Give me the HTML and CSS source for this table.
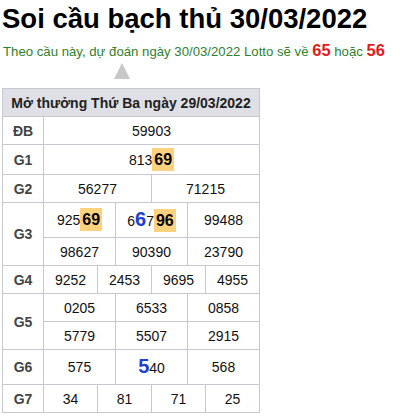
FILE: index.html
```html
<!DOCTYPE html>
<html lang="vi">
<head>
<meta charset="utf-8">
<link rel="stylesheet" href="styles.css">
</head>
<body>
<h1 class="title">Soi cầu bạch thủ 30/03/2022</h1>
<p class="predict">Theo cầu này, dự đoán ngày 30/03/2022 Lotto sẽ về <b class="red">65</b> hoặc <b class="red">56</b></p>
<div class="arrow-wrap"><span class="arrow"></span></div>
<table class="kq">
  <colgroup>
    <col class="c-label">
    <col><col><col><col><col><col><col><col><col><col><col><col>
  </colgroup>
  <thead>
    <tr><th colspan="13" class="head">Mở thưởng Thứ Ba ngày 29/03/2022</th></tr>
  </thead>
  <tbody>
    <tr><td class="lbl">ĐB</td><td colspan="12">59903</td></tr>
    <tr class="r30"><td class="lbl">G1</td><td colspan="12">813<span class="hl">69</span></td></tr>
    <tr><td class="lbl">G2</td><td colspan="6">56277</td><td colspan="6">71215</td></tr>
    <tr class="r35"><td class="lbl" rowspan="2">G3</td><td colspan="4">925<span class="hl">69</span></td><td colspan="4">6<b class="big">6</b>7<span class="hl">96</span></td><td colspan="4">99488</td></tr>
    <tr><td colspan="4">98627</td><td colspan="4">90390</td><td colspan="4">23790</td></tr>
    <tr><td class="lbl">G4</td><td colspan="3">9252</td><td colspan="3">2453</td><td colspan="3">9695</td><td colspan="3">4955</td></tr>
    <tr><td class="lbl" rowspan="2">G5</td><td colspan="4">0205</td><td colspan="4">6533</td><td colspan="4">0858</td></tr>
    <tr><td colspan="4">5779</td><td colspan="4">5507</td><td colspan="4">2915</td></tr>
    <tr class="r35"><td class="lbl">G6</td><td colspan="4">575</td><td colspan="4"><b class="big">5</b>40</td><td colspan="4">568</td></tr>
    <tr><td class="lbl">G7</td><td colspan="3">34</td><td colspan="3">81</td><td colspan="3">71</td><td colspan="3">25</td></tr>
  </tbody>
</table>
</body>
</html>
```
FILE: styles.css
```css
html, body {
  margin: 0;
  padding: 0;
  background: #fff;
}
body {
  padding: 0 2px;
  font-family: "Liberation Sans", Arial, sans-serif;
  color: #111;
}
.title {
  margin: 0;
  padding-top: 3px;
  font-size: 27.5px;
  line-height: 31px;
  font-weight: bold;
  color: #000;
}
.predict {
  margin: 6px 0 0 1px;
  font-size: 13.2px;
  line-height: 20px;
  color: #2f7f2f;
}
.red {
  color: #e01b1b;
  font-size: 16.5px;
}
.arrow-wrap {
  display: flex;
  padding-left: 112px;
  margin-top: 1px;
}
.arrow {
  width: 0;
  height: 0;
  border-left: 8.5px solid transparent;
  border-right: 8.5px solid transparent;
  border-bottom: 16px solid #c8c8c8;
}
.kq {
  margin-top: 9px;
  width: 258px;
  table-layout: fixed;
  border-collapse: collapse;
  border: 1px solid #c3c3cb;
  font-size: 14px;
}
.c-label {
  width: 41px;
}
.kq th, .kq td {
  border: 1px solid #c8c8d0;
  text-align: center;
  padding: 0;
  height: 27px;
  line-height: 16px;
  white-space: nowrap;
}
.kq .r30 td {
  height: 29px;
}
.kq .r35 td {
  height: 34px;
}
.kq .r35 td[rowspan] {
  height: auto;
}
.head {
  background: #dfe0e6;
  font-weight: bold;
  color: #222;
}
.lbl {
  font-weight: bold;
  color: #444;
}
.hl {
  background: #fdd27f;
  font-weight: bold;
  font-size: 16px;
  line-height: 16px;
  color: #000;
  padding: 3px 2px;
}
.big {
  color: #1f3fd0;
  font-size: 20px;
  line-height: 16px;
}
```
